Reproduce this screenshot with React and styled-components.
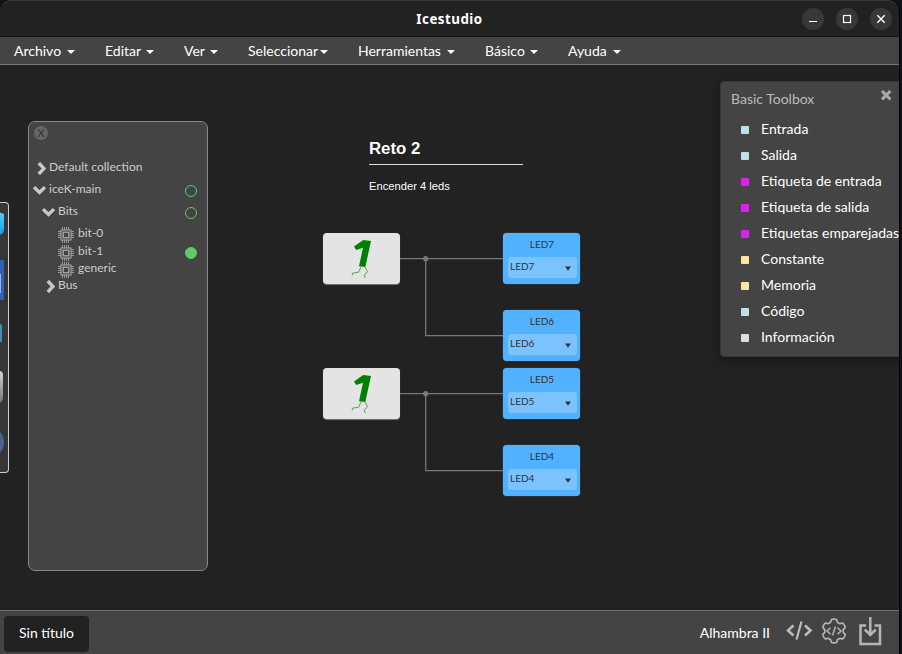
import React from "react";
import styled, { createGlobalStyle } from "styled-components";

const GlobalStyle = createGlobalStyle`
  * { box-sizing: border-box; }
  body {
    margin: 0;
    background: #10131a;
    font-family: Lato, sans-serif;
    overflow: hidden;
  }
`;

const Window = styled.div`
  width: 899px;
  height: 654px;
  display: flex;
  flex-direction: column;
  overflow: hidden;
  background: #222;
  border-radius: 11px 11px 0 0;
  box-shadow: 1px 0 0 #000;
`;

const TitleBar = styled.header`
  height: 37px;
  flex: none;
  display: grid;
  grid-template-columns: 1fr auto 1fr;
  align-items: center;
  border-top: 1px solid #383838;
  border-bottom: 1px solid #151515;
  border-radius: 11px 11px 0 0;
`;

const Title = styled.h1`
  grid-column: 2;
  margin: 0;
  color: #fff;
  font: 700 13.3px/20px "Noto Sans", sans-serif;
  letter-spacing: 0.5px;
`;

const WindowButtons = styled.div`
  display: flex;
  justify-content: flex-end;
  gap: 12px;
  padding-right: 7px;
`;

const WindowButton = styled.button`
  width: 22px;
  height: 22px;
  padding: 0;
  border: 0;
  border-radius: 50%;
  background: #383838;
  svg { display: block; }
`;

const MenuBar = styled.nav`
  height: 28px;
  flex: none;
  display: flex;
  padding-left: 14px;
  gap: 30px;
  background: #444;
  border-bottom: 1px solid #777;
`;

const MenuItem = styled.div`
  width: ${(p) => p.$width}px;
  display: flex;
  align-items: center;
  justify-content: space-between;
  color: #fff;
  font-size: 14px;
  line-height: 27px;
  white-space: nowrap;
`;

const Caret = styled.i`
  flex: none;
  margin-top: 2px;
  border: 4px solid transparent;
  border-top-color: currentColor;
  border-bottom: 0;
`;

const Canvas = styled.main`
  position: relative;
  flex: 1;
`;

const Wires = styled.svg`
  position: absolute;
  left: 0;
  top: 0;
`;

const Note = styled.article`
  position: absolute;
  left: 369px;
  top: 73px;
  width: 154px;
  color: #fff;
  font-family: "Liberation Sans", Arial, sans-serif;
`;

const NoteTitle = styled.h2`
  margin: 0 0 15px;
  height: 27px;
  border-bottom: 1px solid #ddd;
  font-size: 16.8px;
  line-height: 21px;
`;

const NoteText = styled.p`
  margin: 0;
  font-size: 11.2px;
  line-height: 13px;
`;

const Block = styled.div`
  position: absolute;
  left: ${(p) => p.$x}px;
  top: ${(p) => p.$y}px;
  width: 77px;
  height: 51px;
  border-radius: 4px;
  box-shadow: 0 1px 1px #777;
`;

const BitBlock = styled(Block)`
  background: #e4e4e4;
  svg { display: block; }
`;

const LedBlock = styled(Block)`
  padding: 4px 3px 6px 5px;
  background: #52b2ff;
  box-shadow: 0 0 1px #52b2ff;
  color: #333;
  font-size: 10px;
`;

const LedName = styled.div`
  height: 20px;
  padding-right: 1px;
  line-height: 15px;
  text-align: center;
`;

const LedSelect = styled.div`
  height: 21px;
  display: flex;
  justify-content: space-between;
  padding: 0 5px 0 2px;
  border-radius: 3px;
  background: #7bc3ff;
  line-height: 19px;
  svg { margin-top: 9px; }
`;

const Dock = styled.aside`
  position: absolute;
  left: -1px;
  top: 137px;
  width: 10px;
  height: 271px;
  overflow: hidden;
  border: 1px solid #ccc;
  border-left: 0;
  border-radius: 0 4px 4px 0;
  background: #363636;
  svg { display: block; }
`;

const Panel = styled.aside`
  position: absolute;
  left: 28px;
  top: 56px;
  width: 180px;
  height: 450px;
  border: 1px solid #888;
  border-radius: 7px;
  background: #444;
`;

const PanelClose = styled.button`
  display: block;
  width: 14px;
  height: 14px;
  margin: 4px 0 16px 5px;
  padding: 0 0 2px;
  border: 0;
  border-radius: 50%;
  background: #666;
  color: #333;
  font: 11px/11px Lato, sans-serif;
`;

const TreeRow = styled.div`
  height: ${(p) => p.$h}px;
  display: flex;
  align-items: center;
  padding: 0 10px 0 ${(p) => p.$indent}px;
  color: #ccc;
  font-size: 12px;
  line-height: 14px;
  svg { flex: none; margin-top: ${(p) => p.$drop || 2}px; }
`;

const TreeLabel = styled.span`
  flex: 1;
  margin-left: ${(p) => p.$gap || 2}px;
  white-space: nowrap;
`;

const Dot = styled.i`
  width: 12px;
  height: 12px;
  margin-top: 4px;
  border: 1px solid #5fcb68;
  border-radius: 50%;
  background: ${(p) => (p.$full ? "#5fcb68" : "transparent")};
`;

const Toolbox = styled.aside`
  position: absolute;
  left: 720px;
  top: 16px;
  width: 185px;
  height: 276px;
  border: 1px solid #383838;
  border-radius: 4px;
  background: #444;
  box-shadow: 0 3px 9px rgba(0, 0, 0, 0.4);
`;

const ToolboxHead = styled.div`
  height: 33px;
  display: flex;
  justify-content: space-between;
  padding: 8px 2px 0 10px;
  color: #bbb;
  font-size: 14px;
  line-height: 18px;
`;

const ToolRow = styled.div`
  height: 26px;
  display: flex;
  align-items: center;
  gap: 12px;
  padding-left: 20px;
  color: #fff;
  font-size: 14px;
  white-space: nowrap;
`;

const Swatch = styled.i`
  width: 8px;
  height: 8px;
  margin-top: 4px;
  border-radius: 1px;
  background: ${(p) => p.$color};
`;

const Footer = styled.footer`
  height: 44px;
  flex: none;
  display: flex;
  align-items: center;
  justify-content: space-between;
  padding: 0 17px 0 4px;
  border-top: 1px solid #707070;
  background: #444;
  color: #fff;
  font-size: 14px;
`;

const ProjectTab = styled.div`
  width: 85px;
  height: 36px;
  margin-top: 2px;
  border-radius: 4px;
  background: #222;
  line-height: 34px;
  text-align: center;
`;

const Actions = styled.div`
  display: flex;
  align-items: center;
  height: 43px;
  svg { display: block; margin-bottom: 3px; }
`;

const Board = styled.span`
  margin: 0 16px 1px 0;
  white-space: nowrap;
`;

const menus = [
  ["Archivo", 61], ["Editar", 49], ["Ver", 34], ["Seleccionar", 80],
  ["Herramientas", 97], ["Básico", 53], ["Ayuda", 53],
];

const tools = [
  ["Entrada", "#c0dfeb"], ["Salida", "#c0dfeb"],
  ["Etiqueta de entrada", "#dc20ef"], ["Etiqueta de salida", "#dc20ef"],
  ["Etiquetas emparejadas", "#dc20ef"], ["Constante", "#fbe5a0"],
  ["Memoria", "#fbe5a0"], ["Código", "#c0dfeb"], ["Información", "#ddd"],
];

const Chevron = ({ open }) =>
  open ? (
    <svg width="13" height="9" viewBox="0 0 13 9" fill="none" stroke="#c8c8c8" strokeWidth="3.4">
      <path d="M1 1.2 6.5 6.5 12 1.2" />
    </svg>
  ) : (
    <svg width="9" height="13" viewBox="0 0 9 13" fill="none" stroke="#c8c8c8" strokeWidth="3.4">
      <path d="M1.8 1 7 6.5 1.8 12" />
    </svg>
  );

const Chip = () => (
  <svg width="16" height="16" viewBox="0 0 16 16" fill="none" stroke="#aaa">
    <path d="M4.5 0v3M6.5 0v3M8.5 0v3M10.5 0v3M4.5 13v3M6.5 13v3M8.5 13v3M10.5 13v3M0 4.5h3M0 6.5h3M0 8.5h3M0 10.5h3M13 4.5h3M13 6.5h3M13 8.5h3M13 10.5h3" strokeWidth=".8" />
    <rect x="3" y="3" width="10" height="10" strokeWidth="1" />
    <rect x="5.2" y="5.2" width="5.6" height="5.6" strokeWidth="1.3" />
  </svg>
);

const RunningOne = () => (
  <svg width="77" height="51" viewBox="0 0 77 51">
    <path fill="#008000" d="M31 13.5 40.2 7 48 8 42.3 34 36 33.3 40 14.8 33.3 17Z" />
    <path fill="none" stroke="#3f9d45" strokeWidth=".9" d="M38 34 35.5 39.2 29.5 40.2 29.2 42.5M42 34 44.5 38.7 41.2 42.2 42.3 45" />
  </svg>
);

const Led = ({ name, y }) => (
  <LedBlock $x={503} $y={y}>
    <LedName>{name}</LedName>
    <LedSelect>
      {name}
      <svg width="7" height="5"><path d="M0 .5H6L3 4.8Z" fill="#333" /></svg>
    </LedSelect>
  </LedBlock>
);

const gearPath = (() => {
  const points = [];
  for (let i = 0; i <= 120; i++) {
    const a = (i / 120) * Math.PI * 2;
    const r = 10.5 - 1.35 * Math.tanh(2.6 * Math.cos(6 * a) - 0.5);
    points.push(`${(13 + r * Math.cos(a)).toFixed(2)} ${(13 + r * Math.sin(a)).toFixed(2)}`);
  }
  return `M${points.join("L")}Z`;
})();

export default function App() {
  return (
    <>
      <GlobalStyle />
      <Window>
        <TitleBar>
          <Title>Icestudio</Title>
          <WindowButtons>
            <WindowButton aria-label="Minimizar">
              <svg width="22" height="22"><path d="M7 13.5h8" stroke="#fff" /></svg>
            </WindowButton>
            <WindowButton aria-label="Maximizar">
              <svg width="22" height="22"><rect x="7.5" y="7.5" width="7" height="7" fill="none" stroke="#fff" strokeWidth="1.2" /></svg>
            </WindowButton>
            <WindowButton aria-label="Cerrar">
              <svg width="22" height="22"><path d="M7.3 7.3l7.4 7.4M14.7 7.3l-7.4 7.4" stroke="#fff" strokeWidth="1.4" /></svg>
            </WindowButton>
          </WindowButtons>
        </TitleBar>
        <MenuBar>
          {menus.map(([label, width]) => (
            <MenuItem key={label} $width={width}>{label}<Caret /></MenuItem>
          ))}
        </MenuBar>
        <Canvas>
          <Wires width="899" height="545" fill="none" stroke="#777">
            <path d="M400 193.7H503M425.7 193.7V270.7H503M400 328.7H503M425.7 328.7V405.7H503" strokeWidth="1.3" />
            <g fill="#777" stroke="none">
              <circle cx="425.7" cy="193.7" r="2.6" />
              <circle cx="425.7" cy="328.7" r="2.6" />
            </g>
          </Wires>
          <Note>
            <NoteTitle>Reto 2</NoteTitle>
            <NoteText>Encender 4 leds</NoteText>
          </Note>
          <BitBlock $x={323} $y={168}><RunningOne /></BitBlock>
          <BitBlock $x={323} $y={303}><RunningOne /></BitBlock>
          <Led name="LED7" y={168} />
          <Led name="LED6" y={245} />
          <Led name="LED5" y={303} />
          <Led name="LED4" y={380} />

          <Dock>
            <svg width="9" height="269">
              <defs>
                <linearGradient id="cube" x1="0" y1="0" x2="0" y2="1">
                  <stop offset="0" stopColor="#5cc8f2" /><stop offset="1" stopColor="#15a0e4" />
                </linearGradient>
                <linearGradient id="disk" x1="0" y1="0" x2="0" y2="1">
                  <stop offset="0" stopColor="#d4d4cf" /><stop offset="1" stopColor="#74766e" />
                </linearGradient>
              </defs>
              <path d="M0 9 5 11V26Q5 31 0 32Z" fill="url(#cube)" />
              <path d="M0 57H5V97H0Z" fill="#315fb5" />
              <path d="M0 71H2V90H0Z" fill="#9aafdb" />
              <path d="M0 120 3 122V138L0 141Z" fill="#3a92ae" />
              <path d="M0 168Q4 168 4 172V194Q4 199 0 200Z" fill="url(#disk)" />
              <path d="M0 228Q5 232 5 239T0 251Z" fill="#4a648f" />
            </svg>
          </Dock>

          <Panel>
            <PanelClose>X</PanelClose>
            <TreeRow $h={22} $indent={8}><Chevron /><TreeLabel $gap={3}>Default collection</TreeLabel></TreeRow>
            <TreeRow $h={22} $indent={4}><Chevron open /><TreeLabel $gap={3}>iceK-main</TreeLabel><Dot /></TreeRow>
            <TreeRow $h={22} $indent={13}><Chevron open /><TreeLabel $gap={3}>Bits</TreeLabel><Dot /></TreeRow>
            <TreeRow $h={21} $indent={29} $drop={4}><Chip /><TreeLabel $gap={4}>bit-0</TreeLabel></TreeRow>
            <TreeRow $h={16} $indent={29} $drop={4}><Chip /><TreeLabel $gap={4}>bit-1</TreeLabel><Dot $full /></TreeRow>
            <TreeRow $h={18} $indent={29} $drop={4}><Chip /><TreeLabel $gap={4}>generic</TreeLabel></TreeRow>
            <TreeRow $h={16} $indent={17}><Chevron /><TreeLabel $gap={3}>Bus</TreeLabel></TreeRow>
          </Panel>

          <Toolbox>
            <ToolboxHead>
              Basic Toolbox
              <svg width="22" height="12" viewBox="0 0 22 12" stroke="#aaa" strokeWidth="3">
                <path d="M2 1l8.4 8.4M10.4 1 2 9.4" />
              </svg>
            </ToolboxHead>
            {tools.map(([label, color]) => (
              <ToolRow key={label}><Swatch $color={color} />{label}</ToolRow>
            ))}
          </Toolbox>
        </Canvas>
        <Footer>
          <ProjectTab>Sin título</ProjectTab>
          <Actions>
            <Board>Alhambra II</Board>
            <svg width="35" height="26" fill="none" stroke="#bbb" strokeWidth="2.6">
              <path d="M7.5 7.5 2 12.500l5.500 5M19 7.500l5.500 5-5.500 5" />
              <path d="M15.500 3.500 10.500 21.500" strokeWidth="2.2" />
            </svg>
            <svg width="38" height="26" fill="none" stroke="#b5b5b5" strokeWidth="1.7">
              <path d={gearPath} />
              <path d="M9.500 9.700 6 13l3.500 3.300M16.500 9.700 20 13l-3.500 3.300M14.500 8.500l-3 9" strokeWidth="1.5" />
            </svg>
            <svg width="23" height="29" fill="none" stroke="#b5b5b5" strokeWidth="2.5">
              <path d="M7 8.500H1.500V27H21V8.500H15.500M11.300 0V18M5.800 12.500 11.300 18l5.500-5.500" />
            </svg>
          </Actions>
        </Footer>
      </Window>
    </>
  );
}
